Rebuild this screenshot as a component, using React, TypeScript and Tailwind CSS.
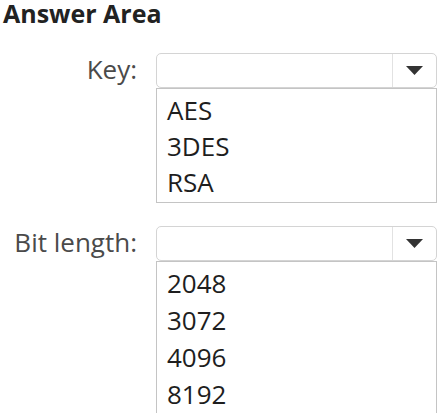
import React from "react";

function Arrow() {
  return (
    <svg width="17" height="9" viewBox="0 0 17 9">
      <polygon points="0,0 17,0 8.5,9" fill="#333" />
    </svg>
  );
}

function Field({ label, items, leading }: { label: string; items: string[]; leading: string }) {
  return (
    <div className="flex items-start">
      <div className="w-[138px] h-[32px] flex items-center justify-end text-[26px] text-[#4a4a4a] pr-[1px]">
        {label}
      </div>
      <div className="ml-[18px] w-[281px] flex flex-col">
        <div className="h-[35px] flex border border-[#d4d4d4] rounded-[5px] bg-white">
          <div className="flex-1" />
          <div className="w-[44px] border-l border-[#e2e2e2] flex items-center justify-center">
            <Arrow />
          </div>
        </div>
        <div className={`border border-[#c4c4c4] pt-[3px] pb-[2px] pl-[10px] text-[26px] text-[#1e1e1e] ${leading}`}>
          {items.map((it) => (
            <div key={it}>{it}</div>
          ))}
        </div>
      </div>
    </div>
  );
}

export default function App() {
  return (
    <div className="w-[438px] h-[413px] overflow-hidden bg-white" style={{ fontFamily: '"Open Sans", "Noto Sans", sans-serif' }}>
      <div className="pl-[3px] pt-[1px] text-[25px] leading-[24px] font-bold text-[#222]">Answer Area</div>
      <div className="mt-[28px]">
        <Field label="Key:" items={["AES", "3DES", "RSA"]} leading="leading-[36px]" />
      </div>
      <div className="mt-[23px]">
        <Field label="Bit length:" items={["2048", "3072", "4096", "8192"]} leading="leading-[37px]" />
      </div>
    </div>
  );
}
